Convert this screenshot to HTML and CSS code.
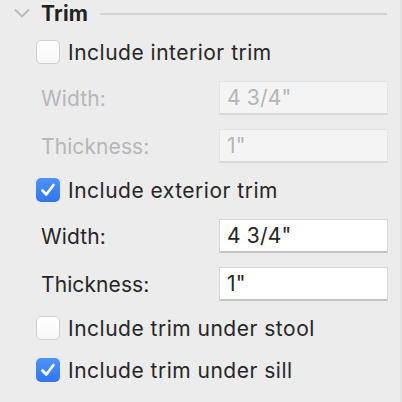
FILE: index.html
```html
<!DOCTYPE html>
<html>
<head>
<meta charset="utf-8">
<link rel="stylesheet" href="styles.css">
</head>
<body>
<div class="panel">
  <div class="header">
    <svg class="chevron" width="16" height="10" viewBox="0 0 16 10"><path d="M1 1.5 L8 8.5 L15 1.5" fill="none" stroke="#b9b9b9" stroke-width="1.8"/></svg>
    <span class="title">Trim</span>
    <span class="rule"></span>
  </div>

  <label class="check row-chk1">
    <span class="box"></span>
    <span class="text">Include interior trim</span>
  </label>

  <div class="field disabled row-f1">
    <span class="label">Width:</span>
    <span class="input">4 3/4"</span>
  </div>
  <div class="field disabled row-f2">
    <span class="label">Thickness:</span>
    <span class="input">1"</span>
  </div>

  <label class="check row-chk2">
    <span class="box on"><svg width="24" height="24" viewBox="0 0 24 24"><path d="M6.5 12.5 L10.3 16.5 L17.5 7" fill="none" stroke="#fff" stroke-width="2.7" stroke-linecap="round" stroke-linejoin="round"/></svg></span>
    <span class="text">Include exterior trim</span>
  </label>

  <div class="field row-f3">
    <span class="label">Width:</span>
    <span class="input">4 3/4"</span>
  </div>
  <div class="field row-f4">
    <span class="label">Thickness:</span>
    <span class="input">1"</span>
  </div>

  <label class="check row-chk3">
    <span class="box"></span>
    <span class="text">Include trim under stool</span>
  </label>

  <label class="check row-chk4">
    <span class="box on"><svg width="24" height="24" viewBox="0 0 24 24"><path d="M6.5 12.5 L10.3 16.5 L17.5 7" fill="none" stroke="#fff" stroke-width="2.7" stroke-linecap="round" stroke-linejoin="round"/></svg></span>
    <span class="text">Include trim under sill</span>
  </label>
</div>
</body>
</html>
```

FILE: styles.css
```css
html, body {
  margin: 0;
  padding: 0;
  background: #ececec;
}
body {
  width: 402px;
  height: 402px;
  overflow: hidden;
  font-family: Inter, "Noto Sans", sans-serif;
  color: #262626;
}
.panel {
  width: 400px;
  height: 402px;
  border-right: 2px solid #e2e2e2;
  display: flex;
  flex-direction: column;
}
.header {
  height: 27px;
  display: flex;
  align-items: center;
  padding-left: 14px;
}
.chevron {
  display: block;
  margin-top: -1px;
}
.title {
  margin-left: 11px;
  font-weight: 700;
  font-size: 21px;
  letter-spacing: 0.2px;
  color: #222;
}
.rule {
  margin-left: 12px;
  width: 287px;
  height: 2px;
  background: #d2d2d2;
}
.check {
  display: flex;
  align-items: center;
  height: 24px;
  padding-left: 36px;
}
.box {
  width: 22px;
  height: 22px;
  border-radius: 5px;
  background: linear-gradient(#ffffff, #f7f7f7);
  border: 1px solid #d0d0d0;
  box-sizing: content-box;
  display: block;
  flex: none;
}
.box.on {
  width: 24px;
  height: 24px;
  border: none;
  background: linear-gradient(#4d93f9, #2f76f4);
}
.box svg {
  display: block;
  width: 24px;
  height: 24px;
}
.text {
  margin-left: 8px;
  font-size: 21px;
  letter-spacing: 0.5px;
}
.field {
  display: flex;
  align-items: center;
  height: 34px;
  padding-left: 41px;
}
.label {
  width: 178px;
  font-size: 21px;
  letter-spacing: 0.1px;
}
.input {
  width: 169px;
  height: 34px;
  box-sizing: border-box;
  background: #fff;
  border: 1px solid #d7d7d7;
  border-bottom: 2px solid #c5c5c5;
  padding-left: 7px;
  display: flex;
  align-items: center;
  font-size: 21px;
  letter-spacing: 0.2px;
}
.disabled .label {
  color: #b6b6b6;
}
.disabled .input {
  background: #f4f4f4;
  border-color: #e4e4e4;
  border-bottom-color: #d9d9d9;
  color: #b5b5b5;
}
.row-chk1 { margin-top: 13px; }
.row-f1 { margin-top: 17px; }
.row-f2 { margin-top: 14px; }
.row-chk2 { margin-top: 15px; }
.row-f3 { margin-top: 17px; }
.row-f4 { margin-top: 14px; }
.row-chk3 { margin-top: 15px; }
.row-chk4 { margin-top: 18px; }
```
